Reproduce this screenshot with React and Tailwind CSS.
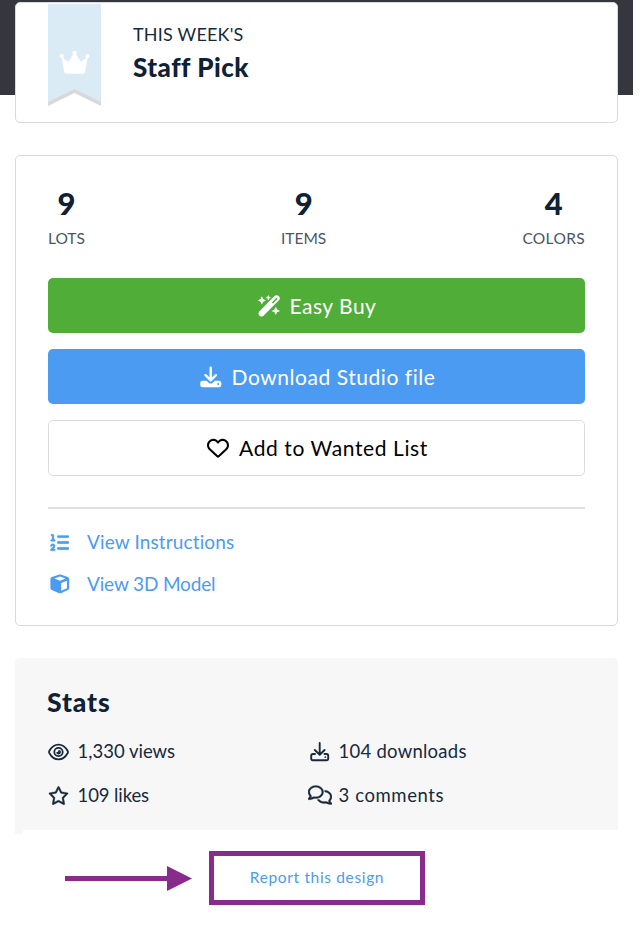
import React from 'react';
import { FaListOl, FaRegStar, FaRegComments, FaRegHeart } from 'react-icons/fa6';

function Ribbon() {
  return (
    <svg className="mt-px shrink-0" width="53" height="103" viewBox="0 0 53 103">
      <path d="M0 0H53V102L26.500 89L0 102Z" fill="#d9d9dc" />
      <path d="M0 0H53V98L26.500 85L0 98Z" fill="#daebf5" />
      <g fill="#fff">
        <circle cx="13.800" cy="52" r="2" />
        <circle cx="26.600" cy="49" r="2.200" />
        <circle cx="39.500" cy="52" r="2" />
        <path d="M13.500 52.800L20.300 57.800L25.500 49.800H27.700L33 57.800L39.800 52.800L37.200 67.600Q36.800 69.800 34.600 69.800H18.700Q16.500 69.800 16.100 67.600Z" />
      </g>
    </svg>
  );
}

function WandIcon() {
  return (
    <svg className="shrink-0" width="22" height="22" viewBox="0 0 22 22" fill="#fff">
      <path d="M16.400 1.100Q18.500 -.8 20.700 1.100Q22.800 3.200 20.900 5.200L5.500 20.700Q3.500 22.400 1.500 20.700Q-.4 18.700 1.300 16.500Z" />
      <path d="M13.800 7.700L17.800 3.200Q18.500 2.600 19 3.100Q19.500 3.600 18.900 4.300L15.200 8.400Z" fill="#50ae38" />
      <path d="M3.900 1.200L5.200 4.100L8 5.400L5.200 6.700L3.900 9.600L2.600 6.700L-.2 5.400L2.600 4.100Z" />
      <path d="M10.300 0L11.200 1.800L13 2.700L11.200 3.600L10.300 5.400L9.400 3.600L7.600 2.700L9.400 1.800Z" />
      <path d="M17.800 11.700L19.100 14.600L22 15.900L19.100 17.200L17.800 20.100L16.500 17.200L13.600 15.900L16.500 14.600Z" />
    </svg>
  );
}

function DownloadIcon() {
  return (
    <svg className="shrink-0" width="22" height="22" viewBox="0 0 22 22" fill="none">
      <path d="M2.500 14.800H6.500L9 16.900Q10.700 18.100 12.400 16.900L15 14.800H19Q21.300 14.800 21.300 17V19Q21.300 21.200 19 21.200H2.500Q.2 21.200 .2 19V17Q.2 14.800 2.500 14.800Z" fill="#fff" />
      <path d="M10.700 1.600V14M5.500 9.200L10.700 14.300L15.900 9.200" stroke="#fff" strokeWidth="2.400" strokeLinecap="round" strokeLinejoin="round" />
      <circle cx="18.200" cy="17.900" r="1" fill="#4c9bf2" />
    </svg>
  );
}

function CubeIcon() {
  return (
    <svg className="ml-[2px] shrink-0" width="20" height="20" viewBox="0 0 20 20">
      <path d="M8.600 .7Q10 .2 11.400 .7L17.700 3Q19.200 3.600 19.200 5.100V14.100Q19.200 15.500 17.900 16.100L11.400 18.900Q10 19.500 8.600 18.900L1.800 16.100Q.4 15.500 .4 14.100V5.100Q.4 3.600 1.900 3Z" fill="#4c9bf2" />
      <path d="M10 2.600L15.500 4.600L10 6.800L4.300 4.600Z" fill="#fff" />
      <path d="M11.200 9.100L17 6.700V14.300L11.200 16.800Z" fill="#fff" />
    </svg>
  );
}

function EyeIcon() {
  return (
    <svg className="ml-[1px] shrink-0" width="21" height="18" viewBox="0 0 21 18" fill="none" stroke="currentColor" strokeWidth="1.800">
      <path d="M1.300 8Q4.800 1.600 10.500 1.600T19.700 8Q20.200 9 19.700 10Q16.200 16.400 10.500 16.400T1.300 10Q.8 9 1.300 8Z" />
      <circle cx="10.500" cy="9" r="4.200" />
      <path d="M10.700 6.700A2.400 2.400 0 1 1 8.200 9.300Q10.600 9.500 10.700 6.700Z" fill="currentColor" stroke="none" />
    </svg>
  );
}

function DownloadOutlineIcon() {
  return (
    <svg className="ml-[2px] shrink-0" width="20" height="20" viewBox="0 0 20 20" fill="none" stroke="currentColor" strokeWidth="1.900" strokeLinecap="round" strokeLinejoin="round">
      <path d="M9.700 1V12.500M4.800 8L9.700 12.800L14.600 8" />
      <path d="M5 12H3Q1.200 12 1.200 13.800V16.500Q1.200 18.300 3 18.300H16.400Q18.200 18.300 18.200 16.500V13.800Q18.200 12 16.400 12H14.500" />
      <circle cx="15.300" cy="15.200" r=".3" strokeWidth="1.200" />
    </svg>
  );
}

function Count({ value, label }) {
  return (
    <div className="flex flex-col items-center">
      <span className="text-[31px] leading-[36px] font-black text-[#0f2134]">{value}</span>
      <span className="mt-[7px] text-[15.500px] leading-[20px] text-[#4a5666]">{label}</span>
    </div>
  );
}

function Stat({ icon, children }) {
  return (
    <div className="flex h-[24px] items-center">
      <span className="flex w-[30.500px] shrink-0 items-center">{icon}</span>
      <span className="whitespace-nowrap">{children}</span>
    </div>
  );
}

export default function App() {
  return (
    <div className="h-[937px] w-[642px] overflow-hidden bg-white font-['Lato',sans-serif] text-[#172a3d] [font-variant-ligatures:none]">
      {/* Banner with the staff pick card hanging over its lower edge */}
      <div className="h-[95px] w-[633px] bg-[#36373e] pt-[2px] pl-[15px]">
        <div className="flex h-[121px] w-[603px] rounded-[5px] border border-[#d9dadc] bg-white pl-[32px]">
          <Ribbon />
          <div className="ml-[32px] pt-[19px]">
            <p className="text-[18px] leading-[24px] tracking-[0.2px] whitespace-nowrap">THIS WEEK'S</p>
            <h2 className="mt-[5px] text-[26px] leading-[32px] font-black tracking-[0.500px] whitespace-nowrap text-[#0f2134]">Staff Pick</h2>
          </div>
        </div>
      </div>

      <div className="mt-[60px] ml-[15px] h-[471px] w-[603px] rounded-[5px] border border-[#d9dadc] px-[32px] pt-[29px]">
        <div className="flex justify-between">
          <Count value="9" label="LOTS" />
          <Count value="9" label="ITEMS" />
          <Count value="4" label={<span className="tracking-[0.350px]">COLORS</span>} />
        </div>

        <div className="mt-[30px] flex flex-col gap-4 text-[21px] text-white">
          <button className="flex h-[55px] items-center justify-center gap-[10px] rounded-[5px] bg-[#50ae38] pl-px">
            <WandIcon />
            <span className="tracking-[0.500px]">Easy Buy</span>
          </button>
          <button className="flex h-[55px] items-center justify-center gap-[10px] rounded-[5px] bg-[#4c9bf2] pl-[2px]">
            <DownloadIcon />
            <span className="tracking-[0.550px]">Download Studio file</span>
          </button>
          <button className="flex h-[56px] items-center justify-center gap-[10px] rounded-[5px] border border-[#dcdcdd] pl-[2px] text-black">
            <FaRegHeart className="size-[22px]" />
            <span className="tracking-[0.600px]">Add to Wanted List</span>
          </button>
        </div>

        <div className="mt-[31px] flex flex-col gap-[18px] border-t-[2px] border-[#e1e1e2] pt-[21px] text-[19px] leading-[24px] text-[#4c9bf2]">
          <a className="flex items-center">
            <FaListOl className="ml-[2px] size-[19px] stroke-[10]" />
            <span className="ml-[18px] tracking-[0.130px]">View Instructions</span>
          </a>
          <a className="flex items-center">
            <CubeIcon />
            <span className="ml-[17px] tracking-[-0.150px]">View 3D Model</span>
          </a>
        </div>
      </div>

      <div className="mt-[32px] ml-[15px] h-[172px] w-[603px] rounded-t-[5px] bg-[#f7f7f7] px-[32px] pt-[28px]">
        <h2 className="text-[26.500px] leading-[32px] font-black tracking-[0.900px] text-[#0f2134]">Stats</h2>
        <div className="mt-[22px] grid grid-cols-[261px_1fr] gap-y-[20px] text-[18.500px]">
          <Stat icon={<EyeIcon />}>1,330 views</Stat>
          <Stat icon={<DownloadOutlineIcon />}><span className="tracking-[0.250px]">104 downloads</span></Stat>
          <Stat icon={<FaRegStar className="mb-[2px] ml-px size-[21px] stroke-[8]" />}><span className="tracking-[-0.100px]">109 likes</span></Stat>
          <Stat icon={<FaRegComments className="mb-[2px] size-[24px] stroke-[8]" />}><span className="tracking-[0.600px]">3 comments</span></Stat>
        </div>
      </div>
      <div className="ml-[15px] h-[4px] w-[8px] bg-[#f7f7f7]" />

      {/* Arrow pointing at the boxed report link */}
      <div className="mt-[17px] ml-[65px] flex items-center">
        <svg className="shrink-0" width="127" height="26" viewBox="0 0 127 26" fill="#892b8c">
          <path d="M0 11H102V1L127 13.500L102 26V16H0Z" />
        </svg>
        <a className="ml-[17px] flex h-[54px] w-[216px] items-center justify-center border-[5px] border-[#892b8c] text-[15.500px] tracking-[0.650px] text-[#4c9bf2]">
          Report this design
        </a>
      </div>
    </div>
  );
}
